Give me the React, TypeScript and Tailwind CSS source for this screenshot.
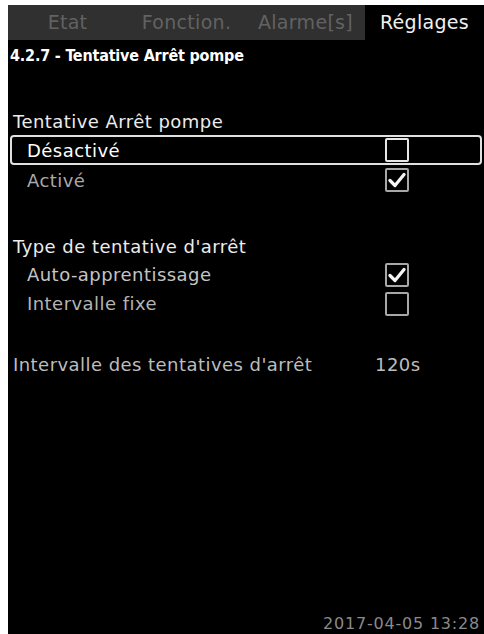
import React from "react";

const font = { fontFamily: '"DejaVu Sans", "Liberation Sans", sans-serif' };

function Check({ checked, bright }: { checked: boolean; bright?: boolean }) {
  return (
    <div
      className={`w-[24px] h-[24px] border-2 rounded-[2px] flex items-center justify-center ${
        bright ? "border-[#e6e6e6]" : "border-[#a8a8a8]"
      }`}
    >
      {checked && (
        <svg width="18" height="16" viewBox="0 0 18 16">
          <path d="M2 8.5 L7 13.5 L16 2.5" fill="none" stroke="#f4f4f4" strokeWidth="3.2" strokeLinecap="round" strokeLinejoin="round" />
        </svg>
      )}
    </div>
  );
}

export default function App() {
  const tabs = ["Etat", "Fonction.", "Alarme[s]", "Réglages"];
  return (
    <div className="w-[484px] h-[634px] bg-white pl-[8px] pt-[5px]" style={font}>
      <div className="bg-black h-full flex flex-col">
        <div className="flex h-[35px] bg-[#303030]">
          {tabs.map((t, i) => (
            <div
              key={t}
              className={`flex-1 flex items-center justify-center text-[19px] tracking-[0.3px] ${
                i === 3 ? "bg-black text-[#f0f0f0]" : "text-[#626262]"
              }`}
            >
              {t}
            </div>
          ))}
        </div>
        <div
          className="h-[31px] flex items-center pl-[2px] text-[16px] font-bold text-white tracking-[-0.2px]"
          style={{ fontFamily: '"DejaVu Sans Condensed", "Roboto", sans-serif' }}
        >
          4.2.7 - Tentative Arrêt pompe
        </div>
        <div className="h-[36px]" />
        <div className="h-[28px] flex items-center pl-[5px] text-[18px] tracking-[0.45px] text-[#ececec]">
          Tentative Arrêt pompe
        </div>
        <div className="mx-[2px] h-[30px] border-2 border-[#e0e0e0] rounded-[4px] flex items-center text-[18px] tracking-[0.45px]">
          <span className="w-[373px] pl-[15px] text-white">Désactivé</span>
          <Check checked={false} bright />
        </div>
        <div className="h-[30px] flex items-center text-[18px] tracking-[0.45px]">
          <span className="w-[377px] pl-[19px] text-[#a9a9a9]">Activé</span>
          <Check checked />
        </div>
        <div className="h-[37px]" />
        <div className="h-[28px] flex items-center pl-[5px] text-[18px] tracking-[0.45px] text-[#ececec]">
          Type de tentative d'arrêt
        </div>
        <div className="h-[29px] flex items-center text-[18px] tracking-[0.45px]">
          <span className="w-[377px] pl-[19px] text-[#c4c4c4]">Auto-apprentissage</span>
          <Check checked />
        </div>
        <div className="h-[29px] flex items-center text-[18px] tracking-[0.45px]">
          <span className="w-[377px] pl-[19px] text-[#b4b4b4]">Intervalle fixe</span>
          <Check checked={false} />
        </div>
        <div className="h-[32px]" />
        <div className="h-[29px] flex items-center text-[18px] tracking-[0.45px] text-[#bdbdbd]">
          <span className="w-[367px] pl-[5px]">Intervalle des tentatives d'arrêt</span>
          <span>120s</span>
        </div>
        <div className="flex-1" />
        <div className="h-[22px] flex items-start justify-end pr-[4px] text-[16px] tracking-[0.8px] text-[#8a8a8a]">
          2017-04-05 13:28
        </div>
      </div>
    </div>
  );
}
